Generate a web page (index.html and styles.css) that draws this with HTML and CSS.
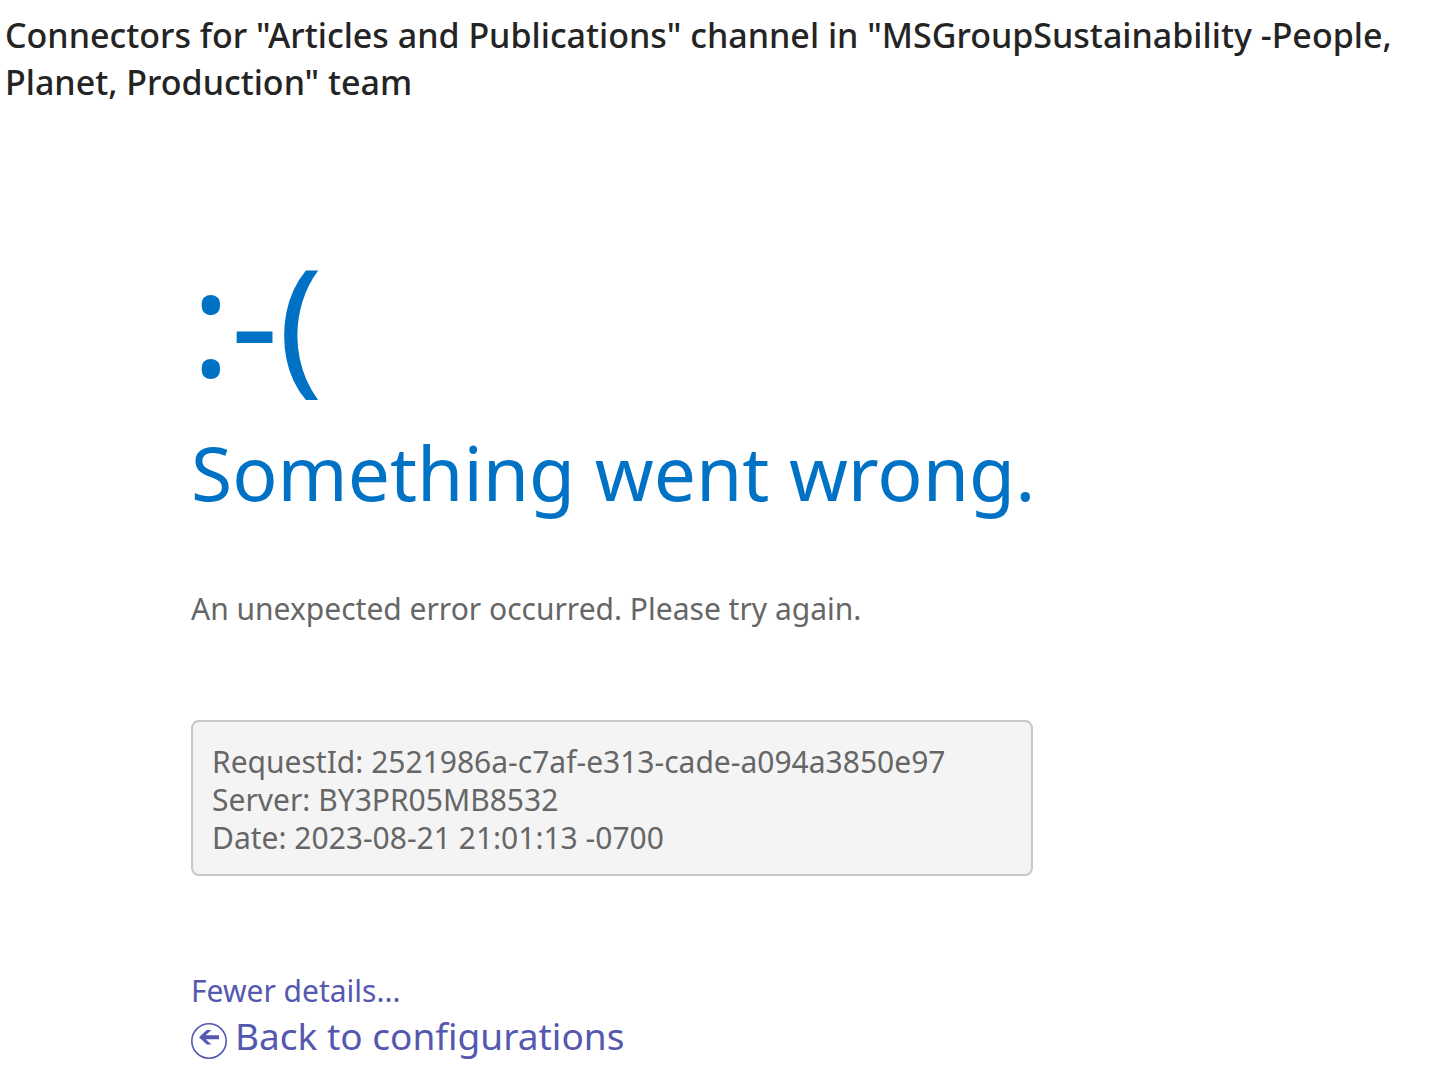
FILE: index.html
```html
<!DOCTYPE html>
<html lang="en">
<head>
  <meta charset="UTF-8">
  <meta name="viewport" content="width=device-width, initial-scale=1.0">
  <title>Connectors</title>
  <link rel="stylesheet" href="styles.css">
</head>
<body>

  <h1 class="page-title">Connectors for "Articles and Publications" channel in "MSGroupSustainability -People, Planet, Production" team</h1>

  <main class="error-page">
    <div class="error-face">:-(</div>
    <h2 class="error-heading">Something went wrong.</h2>
    <p class="error-text">An unexpected error occurred. Please try again.</p>
    <div class="error-details" id="error-details">
      <div>RequestId: 2521986a-c7af-e313-cade-a094a3850e97</div>
      <div>Server: BY3PR05MB8532</div>
      <div>Date: 2023-08-21 21:01:13 -0700</div>
    </div>
    <a class="details-link" href="#error-details">Fewer details...</a>
    <a class="back-link" href="#">
      <svg class="back-icon" viewBox="0 0 36 36" aria-hidden="true">
        <circle cx="18" cy="18" r="17.2"/>
        <path d="M8 14.200L15.800 7H20.500L14.600 12.300H28V16.200H14.600L20.500 21.500H15.800Z"/>
      </svg>
      <span>Back to configurations</span>
    </a>
  </main>

</body>
</html>
```

FILE: styles.css
```css
body {
  margin: 0;
  font-family: "Noto Sans", "Open Sans", sans-serif;
  background-color: #fff;
  color: #666;
}
.page-title {
  margin: 0;
  padding: 12px 5px;
  font-size: 34px;
  line-height: 47px;
  font-weight: 500;
  color: #252424;
}
.error-page {
  display: flex;
  flex-direction: column;
  align-items: flex-start;
  padding: 112px 191px 0;
}
.error-face {
  font-size: 148px;
  line-height: 180px;
  color: #0072c6;
}
.error-heading {
  margin: 12px 0 0;
  font-size: 75px;
  line-height: 100px;
  font-weight: 400;
  color: #0072c6;
}
.error-text {
  margin: 68px 0 0;
  font-size: 30px;
  line-height: 38px;
}
.error-details {
  box-sizing: border-box;
  width: 100%;
  max-width: 842px;
  margin-top: 92px;
  padding: 21px 19px 17px;
  border: 2px solid #c8c8c8;
  border-radius: 8px;
  background-color: #f4f4f4;
  font-size: 30px;
  line-height: 38px;
}
a {
  color: #5558af;
  text-decoration: none;
}
.details-link {
  margin-top: 96px;
  font-size: 30px;
  line-height: 38px;
}
.back-link {
  display: flex;
  align-items: center;
  gap: 8px;
  font-size: 37px;
  line-height: 52px;
}
.back-icon {
  width: 36px;
  height: 36px;
  padding-top: 10px;
}
.back-icon circle {
  fill: none;
  stroke: #5558af;
  stroke-width: 1.6;
}
.back-icon path {
  fill: #5558af;
}
```
